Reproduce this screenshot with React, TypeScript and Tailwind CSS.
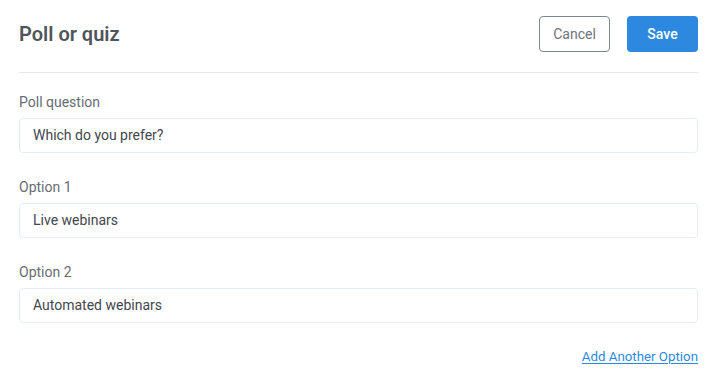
import React from 'react'

const fields = [
  { label: 'Poll question', value: 'Which do you prefer?' },
  { label: 'Option 1', value: 'Live webinars' },
  { label: 'Option 2', value: 'Automated webinars' },
]

export default function App() {
  return (
    <div className="w-[713px] h-[378px] bg-white pl-[19px] pr-[15px] font-['Roboto',sans-serif] overflow-hidden">
      <div className="flex items-center justify-between pt-4 pb-[20px] border-b border-[#e6e8eb]">
        <h1 className="text-[20px] font-semibold text-[#50555c]">Poll or quiz</h1>
        <div className="flex gap-[17px]">
          <button className="w-[71px] h-[36px] rounded-[4px] border border-[#80868d] text-[14px] text-[#6e737a] bg-white">
            Cancel
          </button>
          <button className="w-[71px] h-[36px] rounded-[4px] bg-[#2d89df] text-[14px] font-medium text-white">
            Save
          </button>
        </div>
      </div>

      <div className="pt-[19px] flex flex-col gap-[24px]">
        {fields.map((f) => (
          <div key={f.label} className="flex flex-col gap-[6px]">
            <label className="text-[14px] leading-5 text-[#676c73]">{f.label}</label>
            <div className="h-[35px] rounded-[4px] border border-[#e2edf9] flex items-center px-[13px] text-[14px] text-[#43474e]">
              {f.value}
            </div>
          </div>
        ))}
      </div>

      <div className="flex justify-end pt-[24px]">
        <a href="#" className="text-[13.3px] leading-5 text-[#2d89df] underline underline-offset-2">
          Add Another Option
        </a>
      </div>
    </div>
  )
}
